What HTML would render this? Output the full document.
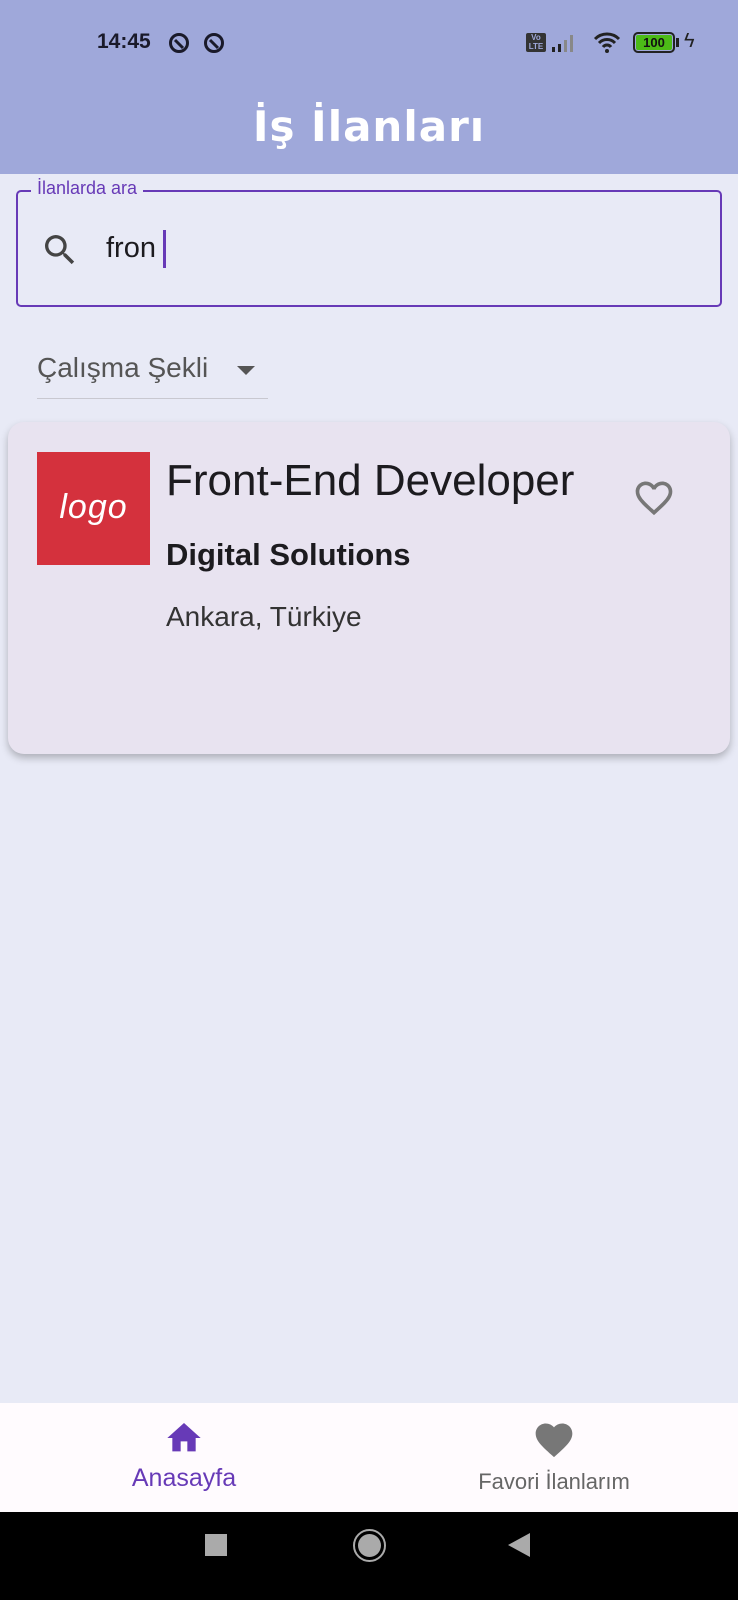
<!DOCTYPE html>
<html><head><meta charset="utf-8"><style>
*{margin:0;padding:0;box-sizing:border-box}
body{width:738px;height:1600px;background:#e8eaf6;font-family:"Liberation Sans",sans-serif;position:relative;overflow:hidden}
.abs{position:absolute}
</style></head><body>
<div class="abs" style="left:0;top:0;width:738px;height:174px;background:#9fa8da"></div>
<div class="abs" style="left:97px;top:30px;font-size:21px;font-weight:bold;color:#1a1a2a">14:45</div>
<svg class="abs" style="left:168px;top:32px" width="58" height="22"><g fill="none" stroke="#1a1a2a" stroke-width="3"><circle cx="11" cy="11" r="8.5"/><circle cx="46" cy="11" r="8.5"/></g><g stroke="#1a1a2a" stroke-width="3"><path d="M7 8l8 8M42 8l8 8"/></g></svg>
<div class="abs" style="left:526px;top:33px;width:20px;height:19px;background:#333;border-radius:2px;color:#9fa8da;font-size:8px;line-height:9px;text-align:center;font-weight:bold">Vo<br>LTE</div>
<svg class="abs" style="left:551px;top:32px" width="32" height="22"><rect x="1" y="15" width="3" height="5" fill="#222"/><rect x="7" y="12" width="3" height="8" fill="#222"/><rect x="13" y="8" width="3" height="12" fill="#888"/><rect x="19" y="3" width="3" height="17" fill="#888"/></svg>
<svg class="abs" style="left:593px;top:30px" width="30" height="24"><path d="M2 9a17 17 0 0 1 24 0M6 13a11 11 0 0 1 16 0M10 17a5 5 0 0 1 8 0" stroke="#222" stroke-width="3" fill="none"/><circle cx="14" cy="21" r="2" fill="#222"/></svg>
<div class="abs" style="left:633px;top:32px;width:42px;height:21px;border:2.5px solid #222;border-radius:5px;padding:1px"><div style="background:#4cbb17;height:100%;border-radius:2px;font-size:13px;font-weight:bold;color:#111;text-align:center;line-height:15px">100</div></div>
<div class="abs" style="left:676px;top:38px;width:3px;height:9px;background:#222"></div>
<div class="abs" style="left:684px;top:30px;font-size:20px;color:#222">ϟ</div>
<div class="abs" style="left:0;top:102px;width:738px;text-align:center;font-size:42px;font-weight:bold;color:#fff;letter-spacing:1px;font-family:'DejaVu Sans',sans-serif">İş İlanları</div>

<div class="abs" style="left:16px;top:190px;width:706px;height:117px;border:2.5px solid #673ab7;border-radius:5px"></div>
<div class="abs" style="left:31px;top:178px;padding:0 6px;background:#e8eaf6;color:#673ab7;font-size:18px">İlanlarda ara</div>
<svg class="abs" style="left:40px;top:230px" width="40" height="40" viewBox="0 0 24 24"><path fill="#444" d="M15.5 14h-.79l-.28-.27A6.47 6.47 0 0 0 16 9.5 6.5 6.5 0 1 0 9.5 16c1.61 0 3.09-.59 4.23-1.57l.27.28v.79l5 4.99L20.49 19l-4.99-5zm-6 0C7.01 14 5 11.99 5 9.5S7.01 5 9.5 5 14 7.01 14 9.5 11.99 14 9.5 14z"/></svg>
<div class="abs" style="left:106px;top:232px;font-size:29px;color:#1c1b1f">fron</div>
<div class="abs" style="left:163px;top:230px;width:3px;height:38px;background:#673ab7"></div>

<div class="abs" style="left:37px;top:352px;font-size:28px;color:#555">Çalışma Şekli</div>
<div class="abs" style="left:237px;top:366px;border-left:9px solid transparent;border-right:9px solid transparent;border-top:9px solid #555"></div>
<div class="abs" style="left:37px;top:398px;width:231px;height:1px;background:#c8c8d0"></div>

<div class="abs" style="left:8px;top:422px;width:722px;height:332px;background:#e8e3f0;border-radius:16px;box-shadow:0 4px 8px rgba(0,0,0,0.25)"></div>
<div class="abs" style="left:37px;top:452px;width:113px;height:113px;background:#d4313d;color:#fff;font-size:34px;font-style:italic;text-align:center;line-height:110px;letter-spacing:1px">logo</div>
<div class="abs" style="left:166px;top:456px;font-size:44px;color:#1c1b1f">Front-End Developer</div>
<div class="abs" style="left:166px;top:537px;font-size:31px;color:#1c1b1f;font-weight:bold">Digital Solutions</div>
<div class="abs" style="left:166px;top:601px;font-size:28px;color:#333">Ankara, Türkiye</div>
<svg class="abs" style="left:632px;top:476px" width="44" height="44" viewBox="0 0 24 24"><path fill="#777" d="M16.5 3c-1.74 0-3.410.81-4.5 2.09C10.91 3.81 9.24 3 7.5 3 4.42 3 2 5.42 2 8.5c0 3.78 3.4 6.86 8.550 11.54L12 21.35l1.45-1.32C18.6 15.36 22 12.28 22 8.5 22 5.42 19.58 3 16.5 3zm-4.4 15.55l-.1.1-.1-.1C7.14 14.24 4 11.39 4 8.5 4 6.5 5.5 5 7.5 5c1.54 0 3.04.99 3.57 2.36h1.87C13.46 5.99 14.96 5 16.5 5c2 0 3.5 1.5 3.5 3.5 0 2.89-3.14 5.74-7.9 10.05z"/></svg>

<div class="abs" style="left:0;top:1403px;width:738px;height:109px;background:#fffbfe"></div>
<svg class="abs" style="left:164px;top:1418px" width="40" height="40" viewBox="0 0 24 24"><path fill="#673ab7" d="M10 20v-6h4v6h5v-8h3L12 3 2 12h3v8z"/></svg>
<div class="abs" style="left:0;top:1464px;width:368px;text-align:center;font-size:25px;color:#673ab7">Anasayfa</div>
<svg class="abs" style="left:532px;top:1418px" width="44" height="44" viewBox="0 0 24 24"><path fill="#777" d="M12 21.35l-1.45-1.32C5.4 15.36 2 12.28 2 8.5 2 5.42 4.42 3 7.5 3c1.74 0 3.41.81 4.5 2.09C13.09 3.810 14.76 3 16.5 3 19.58 3 22 5.42 22 8.5c0 3.78-3.4 6.86-8.55 11.54z"/></svg>
<div class="abs" style="left:370px;top:1469px;width:368px;text-align:center;font-size:22px;color:#666">Favori İlanlarım</div>

<div class="abs" style="left:0;top:1512px;width:738px;height:88px;background:#000"></div>
<div class="abs" style="left:205px;top:1534px;width:22px;height:22px;background:#aaa"></div>
<div class="abs" style="left:353px;top:1529px;width:33px;height:33px;border:2.5px solid #aaa;border-radius:50%;padding:3px"><div style="width:100%;height:100%;background:#aaa;border-radius:50%"></div></div>
<div class="abs" style="left:508px;top:1533px;border-top:12px solid transparent;border-bottom:12px solid transparent;border-right:22px solid #aaa"></div>
</body></html>
